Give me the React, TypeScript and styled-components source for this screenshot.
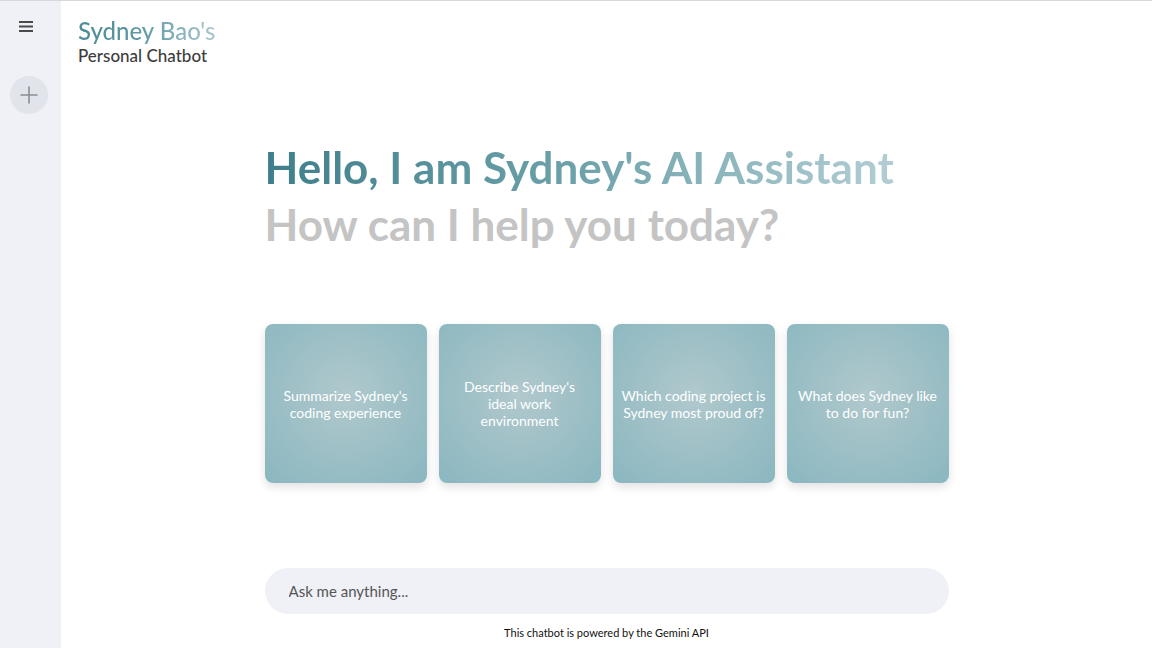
import React from 'react';
import styled, { createGlobalStyle } from 'styled-components';

const GlobalStyle = createGlobalStyle`
  html, body {
    margin: 0;
    padding: 0;
    height: 100%;
    background: #fff;
    font-family: Lato, "Noto Sans", sans-serif;
  }
  #root {
    height: 100%;
  }
`;

// line breaks follow the wrapping in the design
const suggestions = [
  "Summarize Sydney's\ncoding experience",
  "Describe Sydney's\nideal work\nenvironment",
  'Which coding project is\nSydney most proud of?',
  'What does Sydney like\nto do for fun?',
];

const App: React.FC = () => {
  return (
    <>
      <GlobalStyle />
      <Wrapper>
        <Sidebar>
          <MenuButton aria-label="menu">
            <svg width="14" height="11" viewBox="0 0 14 11">
              <rect x="0" y="0" width="14" height="2" fill="#4a4a4a" />
              <rect x="0" y="4.5" width="14" height="2" fill="#4a4a4a" />
              <rect x="0" y="9" width="14" height="2" fill="#4a4a4a" />
            </svg>
          </MenuButton>
          <NewChat aria-label="new chat">
            <svg width="18" height="18" viewBox="0 0 18 18">
              <path d="M9 1v16M1 9h16" stroke="#8a8d92" strokeWidth="1.6" strokeLinecap="round" />
            </svg>
          </NewChat>
        </Sidebar>
        <Main>
          <TopBar>
            <Brand>Sydney Bao's</Brand>
            <Subtitle>Personal Chatbot</Subtitle>
          </TopBar>
          <Center>
            <Greeting>
              <Hello>Hello, I am Sydney's AI Assistant</Hello>
              <Ask>How can I help you today?</Ask>
            </Greeting>
            <Cards>
              {suggestions.map((s) => (
                <Card key={s}>
                  <CardText>{s}</CardText>
                </Card>
              ))}
            </Cards>
            <InputBox>
              <Input placeholder="Ask me anything..." />
            </InputBox>
            <Footer>This chatbot is powered by the Gemini API</Footer>
          </Center>
        </Main>
      </Wrapper>
    </>
  );
};

export default App;

const Wrapper = styled.div`
  display: flex;
  height: 648px;
  border-top: 1px solid #d6d8dc;
  box-sizing: border-box;
`;

const Sidebar = styled.aside`
  width: 61px;
  flex-shrink: 0;
  background: #eff1f6;
  display: flex;
  flex-direction: column;
  align-items: center;
  padding-top: 20px;
  box-sizing: border-box;
`;

const MenuButton = styled.button`
  border: none;
  background: none;
  padding: 0;
  width: 14px;
  height: 11px;
  margin-left: -10px;
  display: flex;
  cursor: pointer;
`;

const NewChat = styled.button`
  margin-top: 44px;
  width: 38px;
  height: 38px;
  border-radius: 50%;
  border: none;
  background: #e1e4ea;
  display: flex;
  align-items: center;
  justify-content: center;
  margin-left: -3px;
  cursor: pointer;
`;

const Main = styled.main`
  flex: 1;
  display: flex;
  flex-direction: column;
  min-width: 0;
`;

const TopBar = styled.header`
  padding: 16px 0 0 17px;
`;

const Brand = styled.div`
  font-size: 24px;
  line-height: 28px;
  font-weight: 500;
  background: linear-gradient(90deg, #4a8b97 0%, #5f98a3 45%, #a9c8cd 100%);
  -webkit-background-clip: text;
  background-clip: text;
  color: transparent;
  width: max-content;
`;

const Subtitle = styled.div`
  font-size: 17px;
  line-height: 22px;
  color: #3d3d3d;
  font-weight: 500;
`;

const Center = styled.div`
  width: 684px;
  margin: 0 auto;
  display: flex;
  flex-direction: column;
  flex: 1;
`;

const Greeting = styled.div`
  margin-top: 72px;
  font-size: 44px;
  line-height: 57px;
  font-weight: 700;
`;

const Hello = styled.div`
  background: linear-gradient(90deg, #3e7f8b 0%, #6ea2ab 50%, #b3ced3 100%);
  -webkit-background-clip: text;
  background-clip: text;
  color: transparent;
  width: max-content;
`;

const Ask = styled.div`
  color: #c4c4c4;
`;

const Cards = styled.div`
  margin-top: 71px;
  display: grid;
  grid-template-columns: repeat(4, 1fr);
  gap: 12px;
`;

const Card = styled.div`
  height: 159px;
  border-radius: 8px;
  background: radial-gradient(circle at 50% 45%, #b0c9cd 0%, #9fc0c6 45%, #8ab7c0 100%);
  box-shadow: 0 4px 10px rgba(0, 0, 0, 0.12);
  display: flex;
  align-items: center;
  justify-content: center;
  padding: 0 6px;
  box-sizing: border-box;
`;

const CardText = styled.p`
  margin: 0;
  color: #fff;
  font-size: 14px;
  line-height: 17px;
  text-align: center;
  white-space: pre-line;
`;

const InputBox = styled.div`
  margin-top: 85px;
  height: 46px;
  border-radius: 23px;
  background: #eff1f6;
  display: flex;
  align-items: center;
  padding: 0 22px;
`;

const Input = styled.input`
  flex: 1;
  border: none;
  outline: none;
  background: transparent;
  font-family: inherit;
  font-size: 15px;
  color: #333;
  &::placeholder {
    color: #555;
  }
`;

const Footer = styled.div`
  margin-top: 12px;
  text-align: center;
  font-size: 11px;
  color: #111;
`;
